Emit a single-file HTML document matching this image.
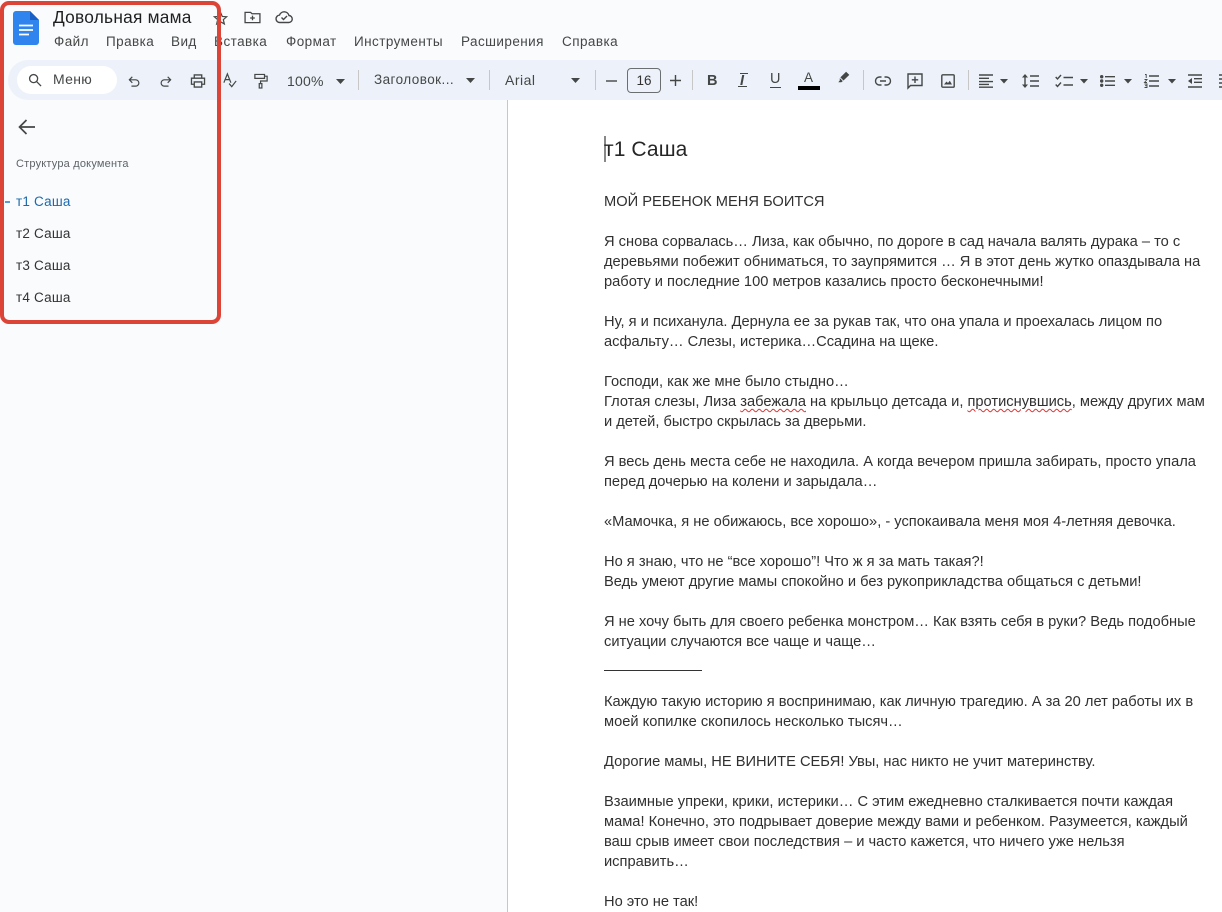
<!DOCTYPE html>
<html lang="ru"><head><meta charset="utf-8"><style>
html,body{margin:0;padding:0;width:1222px;height:912px;overflow:hidden;background:#fff;font-family:"Liberation Sans",sans-serif}
.a{position:absolute;white-space:nowrap}
.m{position:absolute;top:33px;font-size:13.5px;line-height:18px;color:#444746;letter-spacing:.44px;white-space:nowrap}
.l{position:absolute;left:604px;font-size:14.67px;line-height:20px;color:#303030;white-space:nowrap}
.o{position:absolute;left:16px;font-size:13.5px;line-height:18px;color:#333;letter-spacing:.2px;white-space:nowrap}
.t{position:absolute;font-size:14px;line-height:18px;color:#444746;white-space:nowrap;letter-spacing:.3px}
.sep{position:absolute;top:70px;width:1px;height:20px;background:#c7c7c7}
.w{text-decoration:underline wavy #d33;text-decoration-thickness:1px;text-underline-offset:2px}
svg{position:absolute;overflow:visible}
.s{fill:none;stroke:#444746;stroke-width:1.4}
.f{fill:#444746}
</style></head><body>
<div class="a" style="left:0;top:0;width:507px;height:912px;background:#f9fbfd"></div>
<div class="a" style="left:507px;top:0;width:715px;height:60px;background:#f9fbfd"></div>
<div class="a" style="left:507px;top:100px;width:1px;height:812px;background:#c7c7c7"></div>
<div class="a" style="left:8px;top:60px;width:1214px;height:40px;background:#edf2fa;border-radius:20px 0 0 20px"></div>

<svg style="left:13px;top:11px" width="26" height="34"><path d="M3 0H17L26 9V31a3 3 0 0 1-3 3H3a3 3 0 0 1-3-3V3a3 3 0 0 1 3-3Z" fill="#2f84ee"/><path d="M17 0L26 9H17Z" fill="#1a5fc4"/><path d="M6 14.5H20M6 19H20M6 23.5H16" stroke="#fff" stroke-width="1.8"/></svg>
<div class="a" style="left:53px;top:6px;font-size:17.3px;line-height:22px;color:#1f1f1f;letter-spacing:.25px">Довольная мама</div>
<svg style="left:213px;top:11px" width="15" height="14" viewBox="0 0 17 16"><path class="s" stroke-width="1.8" d="M8.5 1.5 10.500 6.200 15.500 6.600 11.700 9.900 12.900 14.800 8.500 12.200 4.100 14.800 5.300 9.900 1.500 6.600 6.500 6.200Z"/></svg>
<svg style="left:244px;top:11px" width="17" height="13" viewBox="0 0 18 14"><path class="s" d="M1 12.500V1.500H7L8.500 3H17V12.500ZM9 5V10M6.500 7.500H11.500"/></svg>
<svg style="left:275px;top:10px" width="18" height="14" viewBox="0 0 18 14"><path class="s" d="M5 12.500a3.700 3.700 0 0 1-.5-7.400A5 5 0 0 1 14 5.500a3.500 3.500 0 0 1-.5 7ZM6.500 7.500 8.500 9.500 12 6"/></svg>

<div class="m" style="left:54px">Файл</div>
<div class="m" style="left:106px">Правка</div>
<div class="m" style="left:171px">Вид</div>
<div class="m" style="left:214px">Вставка</div>
<div class="m" style="left:286px">Формат</div>
<div class="m" style="left:354px">Инструменты</div>
<div class="m" style="left:461px">Расширения</div>
<div class="m" style="left:562px">Справка</div>

<div class="a" style="left:17px;top:66px;width:100px;height:28px;background:#fff;border-radius:14px"></div>
<svg style="left:28px;top:73px" width="14" height="14" viewBox="0 0 15 15"><circle class="s" cx="6" cy="6" r="4.300"/><path class="s" d="M9.200 9.200 14 14"/></svg>
<div class="t" style="left:53px;top:70px">Меню</div>
<svg style="left:128px;top:76px" width="12" height="11" viewBox="0 0 14 13"><path class="s" d="M5 1 1.500 4.500 5 8M1.500 4.500H9a3.700 3.700 0 0 1 0 7.500H4"/></svg>
<svg style="left:160px;top:76px" width="12" height="11" viewBox="0 0 14 13"><path class="s" d="M9 1 12.500 4.500 9 8M12.500 4.500H5a3.700 3.700 0 0 0 0 7.500H10"/></svg>
<svg style="left:190px;top:74px" width="16" height="14" viewBox="0 0 16 15"><path class="s" stroke-width="1.700" d="M4 4V1H12V4M4 11H1V4.500H15V11H12M4 8.500H12V14H4Z"/></svg>
<svg style="left:223px;top:73px" width="14" height="15" viewBox="0 0 16 17"><path class="s" d="M1 11 5 1 9 11M2.500 7.500H7.500M7 12 10 15.500 15 9"/></svg>
<svg style="left:254px;top:73px" width="14" height="16" viewBox="0 0 16 18"><path class="s" stroke-width="1.700" d="M1 1.500H12V6H1ZM12 3.500H15V9H7.500V12"/><rect class="s" x="6" y="12" width="3" height="5"/></svg>
<div class="t" style="left:287px;top:72px;font-size:14px;letter-spacing:.2px">100%</div>
<svg style="left:336px;top:79px" width="9" height="5"><path class="f" d="M0 0H9L4.500 5Z"/></svg>
<div class="sep" style="left:358px"></div>
<div class="t" style="left:374px;top:71px;font-size:13.500px;letter-spacing:.45px">Заголовок...</div>
<svg style="left:466px;top:78px" width="9" height="5"><path class="f" d="M0 0H9L4.500 5Z"/></svg>
<div class="sep" style="left:489px"></div>
<div class="t" style="left:505px;top:71px;letter-spacing:.5px">Arial</div>
<svg style="left:571px;top:78px" width="9" height="5"><path class="f" d="M0 0H9L4.500 5Z"/></svg>
<div class="sep" style="left:595px"></div>
<svg style="left:606px;top:80px" width="11" height="2"><path d="M0 1H11" stroke="#444746" stroke-width="1.400"/></svg>
<div class="a" style="left:627px;top:68px;width:32px;height:23px;border:1px solid #6b6f72;border-radius:4px;font-size:13.500px;line-height:23px;text-align:center;color:#333">16</div>
<svg style="left:670px;top:75px" width="11" height="11"><path d="M5.500 0V11M0 5.500H11" stroke="#444746" stroke-width="1.400"/></svg>
<div class="sep" style="left:692px"></div>
<div class="t" style="left:707px;top:72px;font-weight:bold;font-size:14.500px;letter-spacing:0">B</div>
<div class="t" style="left:740px;top:72px;font-weight:bold;font-style:italic;font-size:14.500px;letter-spacing:0">I</div>
<div class="a" style="left:738px;top:86px;width:9px;height:1px;background:#444746"></div>
<div class="a" style="left:740px;top:73px;width:8px;height:1px;background:#444746"></div>
<div class="t" style="left:770px;top:70px;font-size:14.500px;letter-spacing:0">U</div>
<div class="a" style="left:770px;top:87px;width:11px;height:1px;background:#444746"></div>
<div class="t" style="left:804px;top:69px;font-size:13.500px;letter-spacing:0">A</div>
<div class="a" style="left:798px;top:86px;width:22px;height:4px;background:#000"></div>
<svg style="left:836px;top:71px" width="15" height="13" viewBox="0 0 15 15"><path class="f" d="M10.500.8 14.200 4.500 7.500 11 3.900 7.400ZM3.200 8.200 6.700 11.700 5 13H1.500L3.200 11Z"/></svg>
<div class="sep" style="left:863px"></div>
<svg style="left:875px;top:76px" width="16" height="10" viewBox="0 0 16 10"><path class="s" d="M6.500 1H4.500a4 4 0 0 0 0 8H6.500M9.500 1H11.500a4 4 0 0 1 0 8H9.500M5 5H11"/></svg>
<svg style="left:907px;top:73px" width="16" height="17" viewBox="0 0 16 17"><path class="s" d="M1 1H15V12.500H3.500L1 15ZM8 3.500V10M4.800 6.800H11.200"/></svg>
<svg style="left:941px;top:74px" width="14" height="14" viewBox="0 0 14 14"><rect class="s" x=".8" y=".8" width="12.400" height="12.400" rx="1"/><path class="f" d="M3 10.500 5.500 7.500 7 9 8.800 6.800 11 10.500Z"/></svg>
<div class="sep" style="left:968px"></div>
<svg style="left:979px;top:74px" width="15" height="14" viewBox="0 0 15 14"><path d="M0 1H14M0 4.300H10M0 7.600H14M0 10.400H10M0 13.200H14" stroke="#444746" stroke-width="1.400"/></svg>
<svg style="left:1000px;top:79px" width="8" height="4.500"><path class="f" d="M0 0H8L4 4.500Z"/></svg>
<svg style="left:1021px;top:74px" width="18" height="14" viewBox="0 0 18 14"><path class="s" d="M4 2V12"/><path class="f" d="M4 0 7 3.500H1ZM4 14 1 10.500H7Z"/><path class="s" d="M9 2H18M9 7H18M9 12H18"/></svg>
<svg style="left:1055px;top:74px" width="18" height="15" viewBox="0 0 18 15"><path class="s" d="M.7 3 2.500 5 6 1M.7 10.500 2.500 12.500 6 8.500M8.500 3.500H18M8.500 11H18"/></svg>
<svg style="left:1080px;top:79px" width="8" height="4.500"><path class="f" d="M0 0H8L4 4.500Z"/></svg>
<svg style="left:1100px;top:75px" width="15" height="12" viewBox="0 0 15 12"><circle class="f" cx="1.700" cy="1.700" r="1.700"/><circle class="f" cx="1.700" cy="6" r="1.700"/><circle class="f" cx="1.700" cy="10.300" r="1.700"/><path class="s" d="M5 1.700H15M5 6H15M5 10.300H15"/></svg>
<svg style="left:1124px;top:79px" width="8" height="4.500"><path class="f" d="M0 0H8L4 4.500Z"/></svg>
<svg style="left:1144px;top:74px" width="15" height="14" viewBox="0 0 15 14"><path d="M1 .5H2.200V4M.5 5.500H3L.5 8.500H3M.5 10H3V13.500H.5M1 11.700H3" fill="none" stroke="#444746" stroke-width=".9"/><path class="s" d="M5 2H15M5 7H15M5 12H15"/></svg>
<svg style="left:1168px;top:79px" width="8" height="4.500"><path class="f" d="M0 0H8L4 4.500Z"/></svg>
<svg style="left:1188px;top:74px" width="14" height="14" viewBox="0 0 14 14"><path class="s" d="M0 1H14M6 4.700H14M6 8.300H14M0 13H14"/><path class="f" d="M4 4V10L0 7Z"/></svg>
<svg style="left:1219px;top:74px" width="3" height="14"><path class="s" d="M0 1H3M0 13H3M0 5H3M0 9H3"/></svg>

<svg style="left:18px;top:119px" width="17" height="16" viewBox="0 0 17 16"><path d="M8.500 1 1.500 8 8.500 15M1.500 8H17" fill="none" stroke="#444746" stroke-width="1.700"/></svg>
<div class="a" style="left:16px;top:156px;font-size:11px;line-height:16px;color:#5f6368;letter-spacing:.2px">Структура документа</div>
<div class="a" style="left:5px;top:201px;width:5px;height:1.500px;background:#5b9bd5"></div>
<div class="o" style="top:193px;color:#1c69ad">т1 Саша</div>
<div class="o" style="top:225px">т2 Саша</div>
<div class="o" style="top:257px">т3 Саша</div>
<div class="o" style="top:289px">т4 Саша</div>

<div class="a" style="left:604px;top:136px;width:2px;height:26px;background:#888"></div>
<div class="a" style="left:604px;top:138px;font-size:21px;line-height:24px;color:#262626;letter-spacing:.1px">т1 Саша</div>
<div class="l" style="top:192px">МОЙ РЕБЕНОК МЕНЯ БОИТСЯ</div>
<div class="l" style="top:232px">Я снова сорвалась… Лиза, как обычно, по дороге в сад начала валять дурака – то с</div>
<div class="l" style="top:252px">деревьями побежит обниматься, то заупрямится … Я в этот день жутко опаздывала на</div>
<div class="l" style="top:272px">работу и последние 100 метров казались просто бесконечными!</div>
<div class="l" style="top:312px">Ну, я и психанула. Дернула ее за рукав так, что она упала и проехалась лицом по</div>
<div class="l" style="top:332px">асфальту… Слезы, истерика…Ссадина на щеке.</div>
<div class="l" style="top:372px">Господи, как же мне было стыдно…</div>
<div class="l" style="top:392px">Глотая слезы, Лиза <span class="w">забежала</span> на крыльцо детсада и, <span class="w">протиснувшись</span>, между других мам</div>
<div class="l" style="top:412px">и детей, быстро скрылась за дверьми.</div>
<div class="l" style="top:452px">Я весь день места себе не находила. А когда вечером пришла забирать, просто упала</div>
<div class="l" style="top:472px">перед дочерью на колени и зарыдала…</div>
<div class="l" style="top:512px">«Мамочка, я не обижаюсь, все хорошо», - успокаивала меня моя 4-летняя девочка.</div>
<div class="l" style="top:552px">Но я знаю, что не “все хорошо”! Что ж я за мать такая?!</div>
<div class="l" style="top:572px">Ведь умеют другие мамы спокойно и без рукоприкладства общаться с детьми!</div>
<div class="l" style="top:612px">Я не хочу быть для своего ребенка монстром… Как взять себя в руки? Ведь подобные</div>
<div class="l" style="top:632px">ситуации случаются все чаще и чаще…</div>
<div class="a" style="left:604px;top:670px;width:98px;height:1px;background:#333"></div>
<div class="l" style="top:692px">Каждую такую историю я воспринимаю, как личную трагедию. А за 20 лет работы их в</div>
<div class="l" style="top:712px">моей копилке скопилось несколько тысяч…</div>
<div class="l" style="top:752px">Дорогие мамы, НЕ ВИНИТЕ СЕБЯ! Увы, нас никто не учит материнству.</div>
<div class="l" style="top:792px">Взаимные упреки, крики, истерики… С этим ежедневно сталкивается почти каждая</div>
<div class="l" style="top:812px">мама! Конечно, это подрывает доверие между вами и ребенком. Разумеется, каждый</div>
<div class="l" style="top:832px">ваш срыв имеет свои последствия – и часто кажется, что ничего уже нельзя</div>
<div class="l" style="top:852px">исправить…</div>
<div class="l" style="top:892px">Но это не так!</div>

<div class="a" style="left:0;top:1px;width:213px;height:315px;border:4px solid #db4437;border-radius:9px;box-sizing:content-box"></div>
</body></html>
